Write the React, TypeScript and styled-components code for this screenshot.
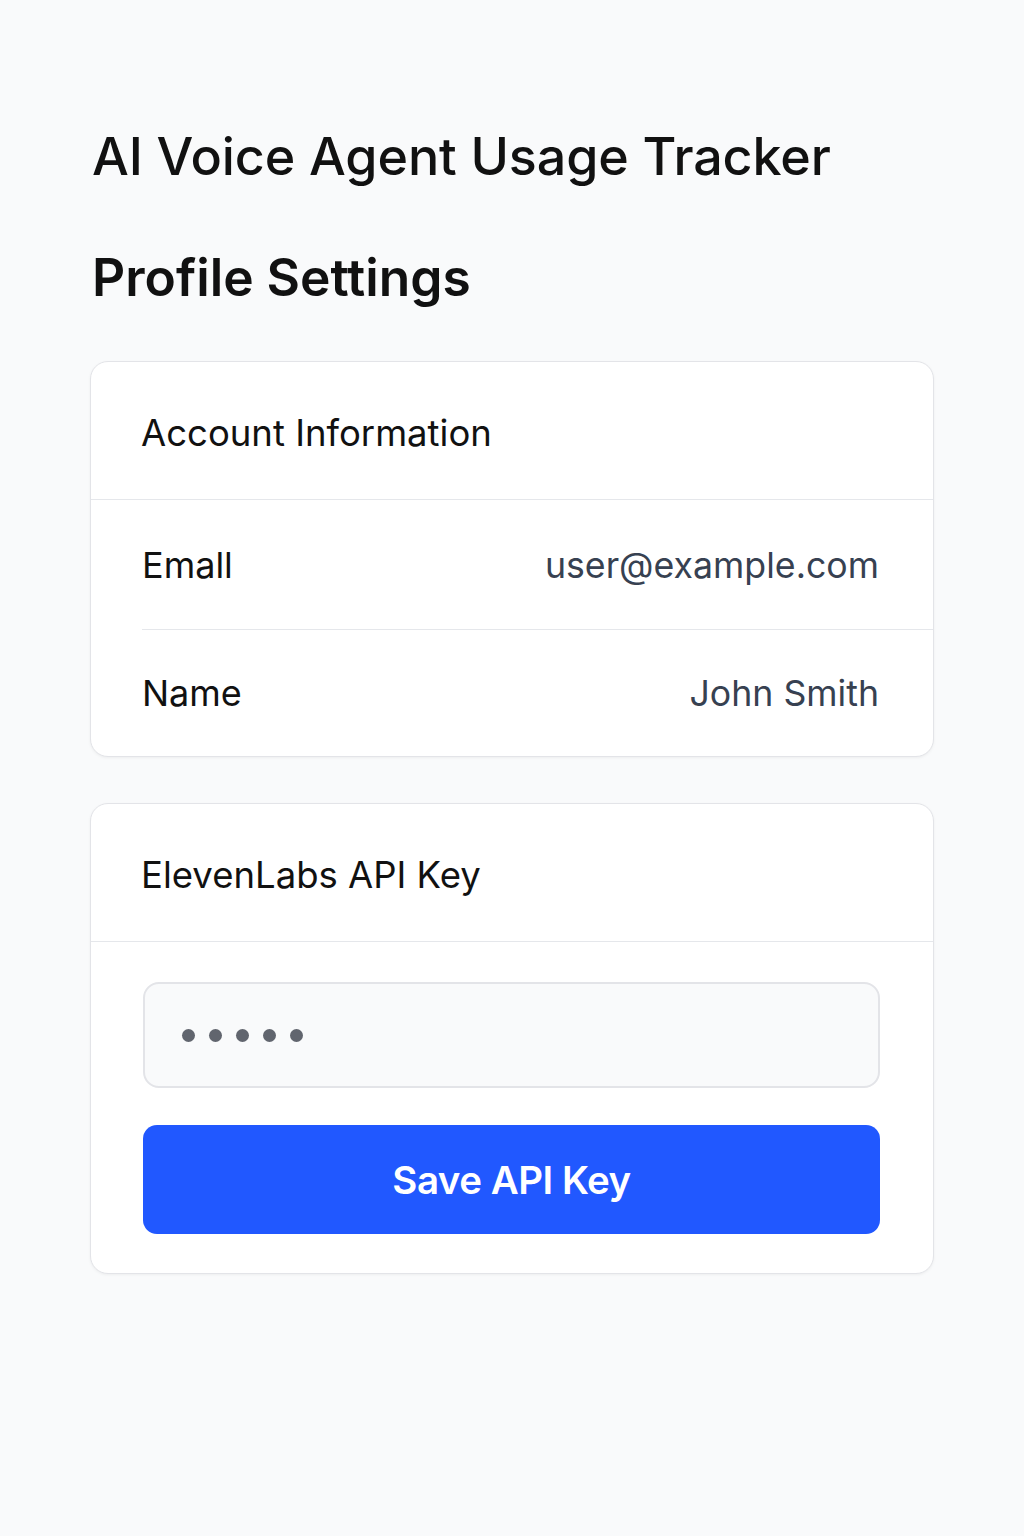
import React from "react";
import styled, { createGlobalStyle } from "styled-components";

const Global = createGlobalStyle`
  html, body { margin: 0; padding: 0; background: #f9fafb; }
  body { font-family: Inter, "Noto Sans", "Liberation Sans", sans-serif; color: #111111; }
`;

const Page = styled.div`
  min-height: 1536px;
  box-sizing: border-box;
  padding: 122px 90px 0 90px;
  display: flex;
  flex-direction: column;
`;

const AppTitle = styled.h1`
  margin: 0 0 0 2px;
  font-size: 52px;
  font-weight: 500;
  letter-spacing: -0.1px;
  line-height: 70px;
  color: #111111;
`;

const PageTitle = styled.h2`
  margin: 50px 0 0 2px;
  font-size: 51.5px;
  font-weight: 600;
  letter-spacing: 0;
  line-height: 70px;
  color: #111111;
`;

const Card = styled.section<{ $top: number }>`
  margin-top: ${(p) => p.$top}px;
  width: 844px;
  box-sizing: border-box;
  background: #ffffff;
  border: 1px solid #e3e4e8;
  border-radius: 18px;
  box-shadow: 0 1px 3px rgba(0, 0, 0, 0.05);
  overflow: hidden;
`;

const CardHeader = styled.div`
  height: 138px;
  box-sizing: border-box;
  padding: 4px 50px 0 50px;
  display: flex;
  align-items: center;
  border-bottom: 1px solid #e5e7eb;
  font-size: 36.5px;
  font-weight: 400;
  color: #111111;
`;

const Rows = styled.div`
  padding-left: 51px;
`;

const Row = styled.div<{ $h: number; $divider?: boolean }>`
  height: ${(p) => p.$h}px;
  box-sizing: border-box;
  display: flex;
  align-items: center;
  justify-content: space-between;
  padding-right: 54px;
  border-bottom: ${(p) => (p.$divider ? "1px solid #e5e7eb" : "none")};
`;

const Label = styled.span`
  font-size: 36px;
  color: #111111;
`;

const Value = styled.span`
  font-size: 35.7px;
  color: #374151;
`;

const KeyBody = styled.div`
  padding: 40px 53px 39px 52px;
  display: flex;
  flex-direction: column;
  gap: 37px;
`;

const KeyInput = styled.div`
  height: 106px;
  box-sizing: border-box;
  border: 2px solid #e3e4e8;
  background: #f9fafb;
  border-radius: 16px;
  display: flex;
  align-items: center;
  padding-left: 37px;
  gap: 14px;
`;

const Dot = styled.span`
  width: 13px;
  height: 13px;
  border-radius: 50%;
  background: #61656e;
`;

const SaveButton = styled.button`
  height: 109px;
  border: none;
  border-radius: 14px;
  background: #2158ff;
  color: #ffffff;
  font-family: inherit;
  font-size: 38.5px;
  font-weight: 600;
  letter-spacing: -0.5px;
  padding-top: 2px;
  cursor: pointer;
`;

export default function App() {
  return (
    <>
      <Global />
      <Page>
        <AppTitle>AI Voice Agent Usage Tracker</AppTitle>
        <PageTitle>Profile Settings</PageTitle>
        <Card $top={49}>
          <CardHeader>Account Information</CardHeader>
          <Rows>
            <Row $h={130} $divider>
              <Label>Emall</Label>
              <Value>user@example.com</Value>
            </Row>
            <Row $h={126}>
              <Label>Name</Label>
              <Value>John Smith</Value>
            </Row>
          </Rows>
        </Card>
        <Card $top={46}>
          <CardHeader>ElevenLabs API Key</CardHeader>
          <KeyBody>
            <KeyInput>
              {[0, 1, 2, 3, 4].map((i) => (
                <Dot key={i} />
              ))}
            </KeyInput>
            <SaveButton>Save API Key</SaveButton>
          </KeyBody>
        </Card>
      </Page>
    </>
  );
}
